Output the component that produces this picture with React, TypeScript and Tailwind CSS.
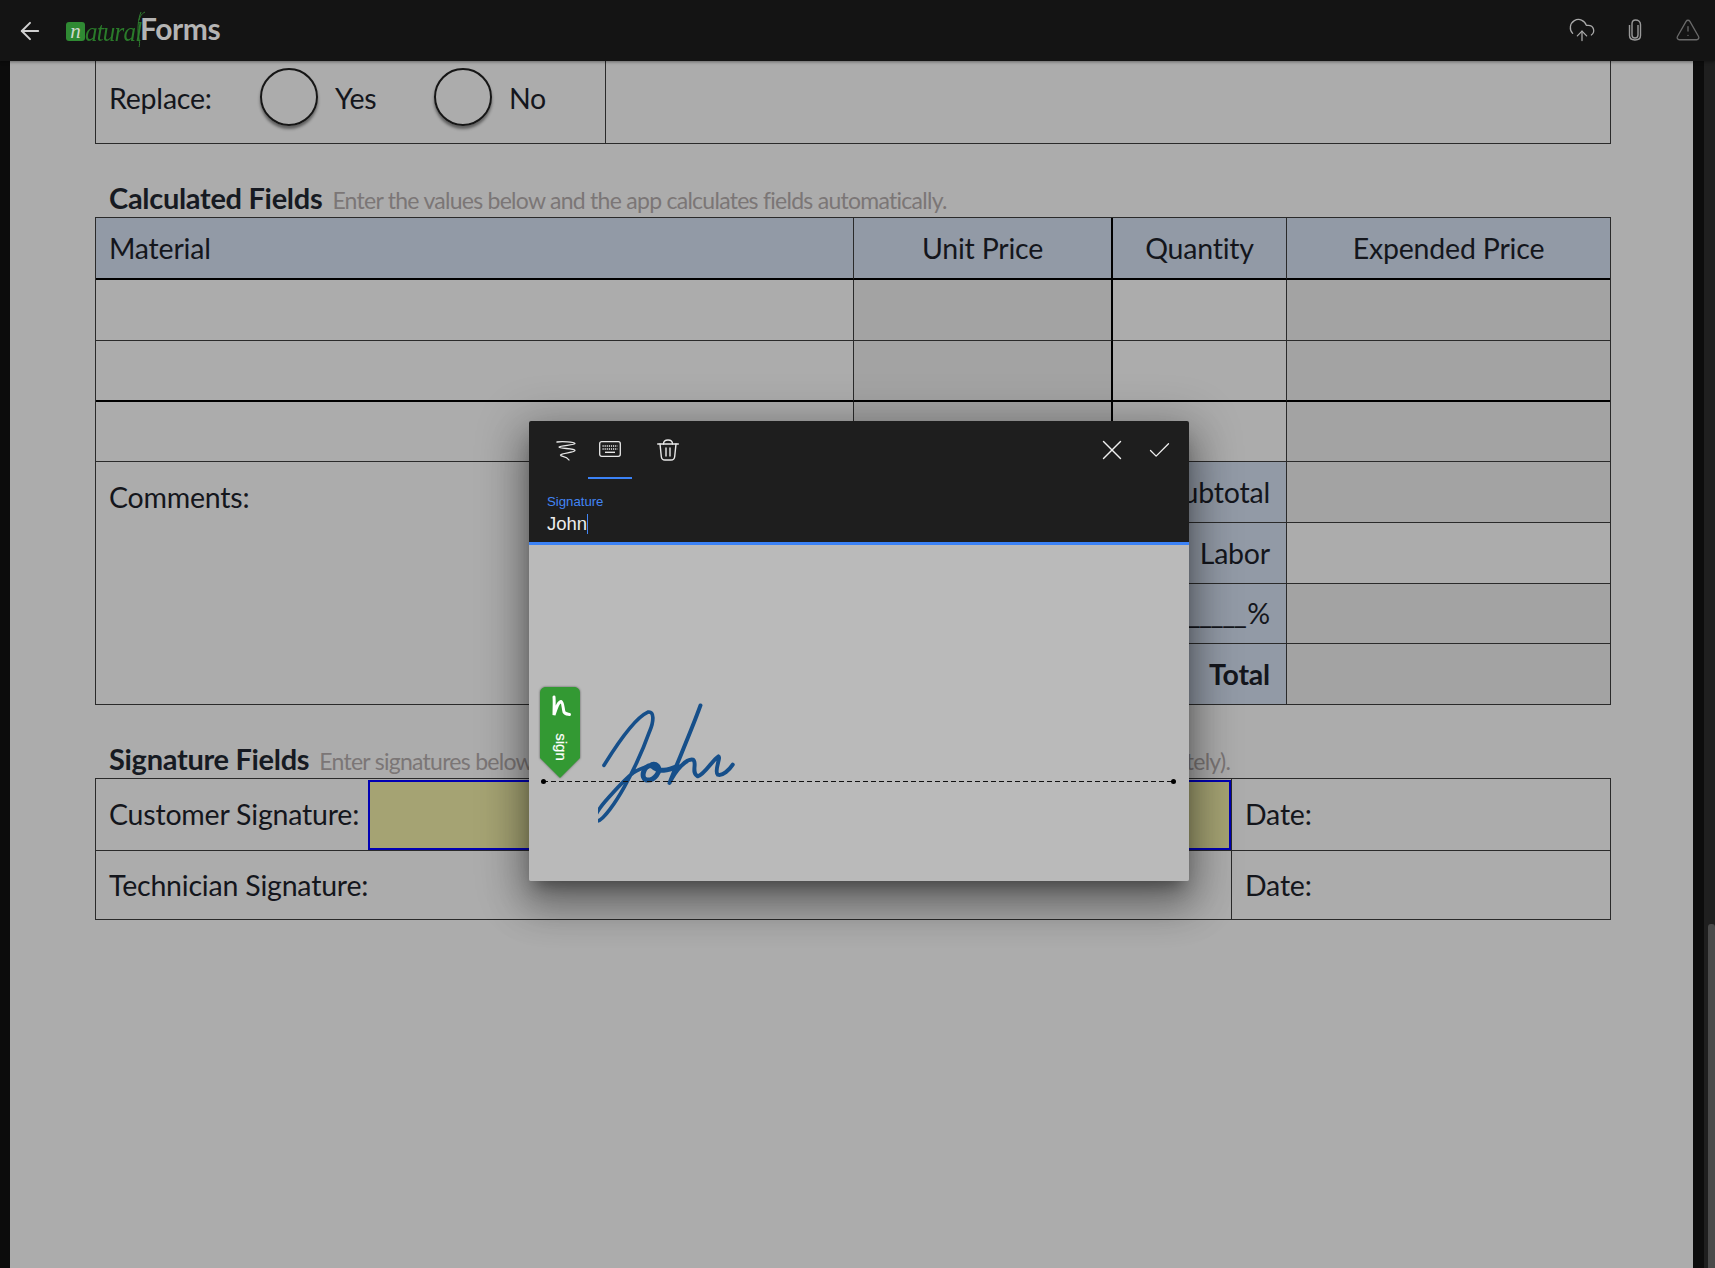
import { Check, CloudUpload, TriangleAlert, X, ArrowLeft } from "lucide-react"

const Logo = () => (
    <div className="flex items-center ml-[22px] -mt-[6px] relative">
        <div className="mt-[7px] w-[19px] h-[19px] rounded-[3px] bg-[#2f8a33] flex items-center justify-center text-[#cfd8cf] text-[21px] leading-none font-['Liberation_Serif',serif] italic">
            n
        </div>
        <span className="mt-[7px] w-[55px] text-[#2a7a2a] text-[25px] leading-none font-['Liberation_Serif',serif] italic tracking-[-0.8px] scale-y-110 origin-left">
            atural
        </span>
        <svg className="absolute left-[66px] -top-[1px]" width="16" height="37" viewBox="0 0 16 37" fill="none">
            <path d="M9 1C6 8 5 20 7 28C7.500 31 8 34 7 36M13 1C9 3 8 6 7 9" stroke="#2f7d2f" strokeWidth="1" />
        </svg>
        <span className="text-[#b4b4b4] text-[30px] leading-none font-bold font-['Lato',sans-serif] tracking-[-0.4px]">Forms</span>
    </div>
)

const Clip = () => (
    <svg width="14" height="22" viewBox="0 0 14 22" fill="none" stroke="#9a9a9a" strokeWidth="1.4">
        <path d="M10 6V16C10 18 8.500 19 7 19C5.500 19 4 18 4 16V5C4 2.500 5.500 1 7.500 1C10 1 12.500 2.500 12.500 5.500V16.500C12.500 19.500 10 21 7 21C4 21 1.500 19.500 1.500 16.500V6" />
    </svg>
)

const TopBar = () => (
    <header className="h-[61px] shrink-0 bg-[#141414] flex items-center justify-between shadow-[0_1px_3px_rgba(0,0,0,0.4)] z-10">
        <div className="flex items-center">
            <ArrowLeft className="ml-[16px] w-[28px] h-[28px] text-[#d0d0d0]" strokeWidth={1.7} />
            <Logo />
        </div>
        <div className="flex items-center pr-[14px] -mt-[2px]">
            <CloudUpload className="w-[28px] h-[28px] text-[#aaaaaa]" strokeWidth={1.1} />
            <div className="ml-[32px]"><Clip /></div>
            <TriangleAlert className="ml-[33px] w-[26px] h-[26px] text-[#6a6a6a]" strokeWidth={1.2} />
        </div>
    </header>
)

const Radio = () => (
    <div className="w-[58px] h-[58px] rounded-full border-2 border-[#161616] shadow-[0_3px_3px_rgba(0,0,0,0.45)]" />
)

const SectionTitle = ({ title, hint }: { title: string; hint: string }) => (
    <div className="flex items-baseline pl-[14px] whitespace-nowrap">
        <span className="font-bold text-[29px] leading-[34px] tracking-[-0.3px] text-[#161a22]">{title}</span>
        <span className="text-[23px] leading-[34px] tracking-[-0.73px] text-[#7b7676] ml-[10px]">{hint}</span>
    </div>
)

const cell = "flex items-center border-[#2a2a2a] text-[28.5px] text-[#14161c] tracking-[-0.2px]"
const head = "bg-[#929aa6]"

const CalcTable = () => (
    <div className="grid grid-cols-[758px_259px_174px_1fr] grid-rows-[62px_61px_61px_60px_61px_61px_60px_60px] border border-[#2a2a2a] w-[1516px]">
        <div className={`${cell} ${head} border-r pl-[13px] border-b-2 border-b-black`}>Material</div>
        <div className={`${cell} ${head} border-r-2 border-r-black justify-center border-b-2 border-b-black`}>Unit Price</div>
        <div className={`${cell} ${head} border-r justify-center border-b-2 border-b-black`}>Quantity</div>
        <div className={`${cell} ${head} justify-center border-b-2 border-b-black`}>Expended Price</div>

        <div className={`${cell} border-r border-b`} />
        <div className={`${cell} bg-[#a3a3a3] border-r-2 border-r-black border-b`} />
        <div className={`${cell} border-r border-b`} />
        <div className={`${cell} bg-[#a3a3a3] border-b`} />

        <div className={`${cell} border-r border-b-2 border-b-black`} />
        <div className={`${cell} bg-[#a3a3a3] border-r-2 border-r-black border-b-2 border-b-black`} />
        <div className={`${cell} border-r border-b-2 border-b-black`} />
        <div className={`${cell} bg-[#a3a3a3] border-b-2 border-b-black`} />

        <div className={`${cell} border-r border-b`} />
        <div className={`${cell} bg-[#a3a3a3] border-r-2 border-r-black border-b`} />
        <div className={`${cell} border-r border-b`} />
        <div className={`${cell} bg-[#a3a3a3] border-b`} />

        <div className={`${cell} row-span-4 border-r items-start pl-[13px] pt-[14px]`}>Comments:</div>
        <div className={`${cell} ${head} col-span-2 border-r border-b justify-end pr-[16px]`}>Subtotal</div>
        <div className={`${cell} bg-[#a3a3a3] border-b`} />
        <div className={`${cell} ${head} col-span-2 border-r border-b justify-end pr-[16px]`}>Labor</div>
        <div className={`${cell} border-b`} />
        <div className={`${cell} ${head} col-span-2 border-r border-b justify-end pr-[16px]`}>
            Tax <span className="tracking-[-1.500px]">____________</span><span className="ml-[2px]">%</span>
        </div>
        <div className={`${cell} bg-[#a3a3a3] border-b`} />
        <div className={`${cell} ${head} col-span-2 border-r justify-end pr-[16px] font-bold`}>Total</div>
        <div className={`${cell} bg-[#a3a3a3]`} />
    </div>
)

const SignatureTable = () => (
    <div className="grid grid-cols-[1136px_1fr] grid-rows-[72px_68px] border border-[#2a2a2a] w-[1516px]">
        <div className={`${cell} border-r border-b pl-[13px]`}>
            <span className="w-[259px] shrink-0">Customer Signature:</span>
            <div className="h-[70px] flex-1 bg-[#a5a373] border-2 border-[#0000b4]" />
        </div>
        <div className={`${cell} border-b pl-[13px]`}>Date:</div>
        <div className={`${cell} border-r pl-[13px]`}>Technician Signature:</div>
        <div className={`${cell} pl-[13px]`}>Date:</div>
    </div>
)

const FormPage = () => (
    <main className="flex-1 bg-[#acacac] pl-[85px] font-['Lato',sans-serif] overflow-hidden">
        <div className="grid grid-cols-[510px_1fr] h-[83px] w-[1516px] border border-t-0 border-[#2a2a2a]">
            <div className={`${cell} border-r pl-[13px] pb-[7px]`}>
                <span className="w-[151px] shrink-0">Replace:</span>
                <div className="-mt-[3px]"><Radio /></div>
                <span className="ml-[17px] w-[99px] shrink-0">Yes</span>
                <div className="-mt-[4px]"><Radio /></div>
                <span className="ml-[17px]">No</span>
            </div>
            <div />
        </div>
        <div className="h-[73px] flex flex-col justify-end">
            <SectionTitle title="Calculated Fields" hint="Enter the values below and the app calculates fields automatically." />
        </div>
        <CalcTable />
        <div className="h-[73px] flex flex-col justify-end">
            <SectionTitle title="Signature Fields" hint="Enter signatures below (tap a field to sign, and each signature is captured and is stored separately)." />
        </div>
        <SignatureTable />
    </main>
)

const Squiggle = () => (
    <svg width="20" height="21" viewBox="0 0 20 21" fill="none" stroke="#e8e8e8" strokeWidth="1.3" strokeLinecap="round" strokeLinejoin="round">
        <path d="M1 2C6 1 18 2 19 3.500C19 5 4 5.500 3 7C3 9 19 8 19 10.500C19 12.500 5 13 4.500 15C4.500 17 10 15.500 13 20" />
    </svg>
)

const KeyboardIcon = () => (
    <svg width="22" height="16" viewBox="0 0 22 16" fill="none" stroke="#e8e8e8">
        <rect x="0.700" y="0.700" width="20.600" height="14.600" rx="2" strokeWidth="1.300" />
        <path d="M3.500 5H18.500M3.500 8H18.500" strokeWidth="1.500" strokeDasharray="1.200 0.900" />
        <path d="M6 11.300H16" strokeWidth="1.400" />
    </svg>
)

const TrashIcon = () => (
    <svg width="22" height="22" viewBox="0 0 22 22" fill="none" stroke="#e8e8e8" strokeWidth="1.400" strokeLinecap="round">
        <path d="M0.700 5H21.300" />
        <path d="M6.500 5C6.500 2.500 8.500 1 11 1C13.500 1 15.500 2.500 15.500 5" />
        <path d="M3 5L4.300 17.500C4.500 20 6 21 8 21H14C16 21 17.500 20 17.700 17.500L19 5" />
        <path d="M9 9V17M13 9V17" />
    </svg>
)

const Badge = () => (
    <div className="absolute left-[11px] top-[142px] w-[40px] h-[91px]">
        <svg className="absolute inset-0 drop-shadow-[0_0_1px_rgba(0,0,0,0.5)]" width="40" height="91" viewBox="0 0 40 91">
            <path d="M6 0H34C37.500 0 40 2.500 40 6V71L20 91L0 71V6C0 2.500 2.500 0 6 0Z" fill="#339933" />
            <path d="M14 10C14.500 15 14 21 14 28C16 22 18 15 21 14.500C23 15 23 21 24 25C25 27 27 27 29.500 27.500" fill="none" stroke="#ffffff" strokeWidth="3" strokeLinecap="round" />
        </svg>
        <span className="absolute left-[2px] top-[46px] w-[40px] h-[28px] flex items-center justify-center text-white text-[15px] leading-none rotate-90 font-['Liberation_Sans',sans-serif] [-webkit-text-stroke:0.2px_white]">
            sign
        </span>
    </div>
)

const Ink = () => (
    <svg className="absolute left-[69px] top-[158px]" width="173" height="125" viewBox="80 30 520 375" fill="none" stroke="#164f8a" strokeLinecap="round" strokeLinejoin="round">
        <path d="M258 282C290 230 350 140 390 122C410 118 408 150 395 180C370 250 345 300 320 345C295 390 255 450 236 450C222 450 232 425 262 390C290 358 320 325 345 305C360 295 375 290 392 285" strokeWidth="11" transform="translate(-160 -65)" />
        <path d="M400 282C375 285 368 320 385 326C410 330 430 300 420 285C412 276 402 278 400 282C425 305 450 298 480 285" strokeWidth="15" transform="translate(-160 -65)" />
        <path d="M548 102C520 180 480 270 455 335C475 295 505 262 525 265C540 272 518 305 540 315C560 310 585 265 602 255C610 258 588 300 600 310C615 315 635 295 645 280" strokeWidth="12" transform="translate(-160 -65)" />
    </svg>
)

const SignDialog = () => (
    <div className="absolute left-[529px] top-[421px] w-[660px] h-[460px] z-20 flex flex-col rounded-[2px] shadow-[0_11px_15px_-7px_rgba(0,0,0,0.35),0_24px_38px_3px_rgba(0,0,0,0.25),0_9px_46px_8px_rgba(0,0,0,0.25)] font-['Liberation_Sans',sans-serif]">
        <div className="h-[124px] shrink-0 bg-[#1e1e1e] border-b-[3px] border-[#3b82f6] rounded-t-[2px]">
            <div className="flex items-center h-[58px] pl-[15px] pr-[8px]">
                <div className="w-[44px] h-[58px] flex items-center justify-center"><Squiggle /></div>
                <div className="w-[44px] h-[58px] flex items-center justify-center border-b-2 border-[#3b82f6]">
                    <KeyboardIcon />
                </div>
                <div className="w-[44px] h-[58px] ml-[14px] flex items-center justify-center">
                    <TrashIcon />
                </div>
                <div className="ml-auto w-[44px] flex justify-center">
                    <X className="w-[34px] h-[34px] text-[#f0f0f0]" strokeWidth={1} />
                </div>
                <div className="ml-[3px] w-[44px] flex justify-center">
                    <Check className="w-[27px] h-[27px] text-[#f0f0f0]" strokeWidth={1.15} />
                </div>
            </div>
            <div className="pl-[18px] pt-[15px]">
                <div className="text-[13.2px] leading-[16px] text-[#4285f4]">Signature</div>
                <div className="text-[18.5px] leading-[22px] text-[#ededed] flex items-center mt-[3px]">
                    John<span className="w-px h-[20px] bg-[#4285f4]" />
                </div>
            </div>
        </div>
        <div className="relative flex-1 bg-[#bababa] rounded-b-[2px]">
            <Ink />
            <div className="absolute left-[14px] right-[15px] top-[236px] h-px bg-[repeating-linear-gradient(90deg,#111111_0_5px,transparent_5px_8px)]" />
            <div className="absolute left-[12px] top-[234px] w-[5px] h-[5px] rounded-full bg-black" />
            <div className="absolute right-[13px] top-[234px] w-[5px] h-[5px] rounded-full bg-black" />
            <Badge />
        </div>
    </div>
)

export default function App() {
    return (
        <div className="relative w-full h-screen flex flex-col overflow-hidden bg-[#0c0c0c]">
            <TopBar />
            <div className="flex-1 flex min-h-0">
                <div className="w-[10px] shrink-0" />
                <FormPage />
                <div className="w-[11px] shrink-0" />
                <div className="w-[11px] shrink-0 bg-[#1f1f1f] flex flex-col items-end pt-[863px]">
                    <div className="w-[7px] flex-1 bg-[#4a4a4a] rounded-t-[3px]" />
                </div>
            </div>
            <SignDialog />
        </div>
    )
}
